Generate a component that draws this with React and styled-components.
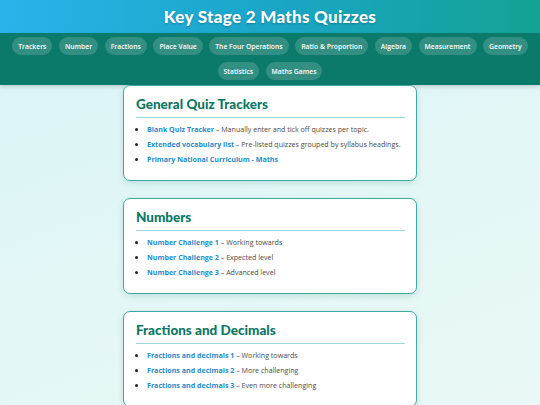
import styled, { createGlobalStyle } from 'styled-components';

const GlobalStyle = createGlobalStyle`
  html, body {
    margin: 0;
    padding: 0;
  }
  body {
    font-family: 'Open Sans', 'Liberation Sans', sans-serif;
    background: linear-gradient(160deg, #d9f4f5 0%, #e4f7f6 60%, #e9f8f5 100%);
    min-height: 405px;
  }
`;

const navItems = [
  'Trackers', 'Number', 'Fractions', 'Place Value', 'The Four Operations',
  'Ratio & Proportion', 'Algebra', 'Measurement', 'Geometry', 'Statistics', 'Maths Games',
];

const sections = [
  {
    title: 'General Quiz Trackers',
    items: [
      { link: 'Blank Quiz Tracker', desc: 'Manually enter and tick off quizzes per topic.' },
      { link: 'Extended vocabulary list', desc: 'Pre-listed quizzes grouped by syllabus headings.' },
      { link: 'Primary National Curriculum - Maths' },
    ],
  },
  {
    title: 'Numbers',
    items: [
      { link: 'Number Challenge 1', desc: 'Working towards' },
      { link: 'Number Challenge 2', desc: 'Expected level' },
      { link: 'Number Challenge 3', desc: 'Advanced level' },
    ],
  },
  {
    title: 'Fractions and Decimals',
    items: [
      { link: 'Fractions and decimals 1', desc: 'Working towards' },
      { link: 'Fractions and decimals 2', desc: 'More challenging' },
      { link: 'Fractions and decimals 3', desc: 'Even more challenging' },
    ],
  },
];

const App = () => {
  return (
    <>
      <GlobalStyle />
      <Header>
        <Title>Key Stage 2 Maths Quizzes</Title>
      </Header>
      <Nav>
        {navItems.map((n) => (
          <Pill key={n}>{n}</Pill>
        ))}
      </Nav>
      <Main>
        {sections.map((s) => (
          <Card key={s.title}>
            <CardTitle>{s.title}</CardTitle>
            <List>
              {s.items.map((it) => (
                <Item key={it.link}>
                  <Link>{it.link}</Link>
                  {it.desc && <Desc> – {it.desc}</Desc>}
                </Item>
              ))}
            </List>
          </Card>
        ))}
      </Main>
    </>
  );
};

const Header = styled.header`
  height: 33px;
  display: flex;
  align-items: center;
  justify-content: center;
  background: linear-gradient(90deg, #29b3ea 0%, #1aa6c6 50%, #14a293 100%);
`;

const Title = styled.h1`
  margin: 0;
  color: #fff;
  font-family: 'Lato', 'Liberation Sans', sans-serif;
  font-weight: 900;
  font-size: 17px;
  letter-spacing: 0.3px;
  text-shadow: 0 1px 2px rgba(0, 0, 0, 0.25);
`;

const Nav = styled.nav`
  background: #0b7a6b;
  display: flex;
  flex-wrap: wrap;
  justify-content: center;
  gap: 7px 6.5px;
  padding: 4px 8px 5px;
  box-shadow: 0 2px 4px rgba(0, 0, 0, 0.15);
`;

const Pill = styled.span`
  display: inline-flex;
  align-items: center;
  height: 18px;
  padding: 0 6px;
  border-radius: 9px;
  background: rgba(255, 255, 255, 0.16);
  color: #fff;
  font-size: 6.8px;
  font-weight: 600;
`;

const Main = styled.main`
  display: flex;
  flex-direction: column;
  align-items: center;
  gap: 17px;
  padding: 0 0 20px;
`;

const Card = styled.section`
  width: 294px;
  box-sizing: border-box;
  background: #fff;
  border: 1px solid #3fa9a1;
  border-radius: 7px;
  padding: 8px 11px 13px 12px;
  box-shadow: 0 2px 6px rgba(20, 120, 110, 0.18);
`;

const CardTitle = styled.h2`
  margin: 0;
  padding-bottom: 3px;
  border-bottom: 1.5px solid #9bd7e2;
  color: #0c7765;
  font-family: 'Lato', 'Liberation Sans', sans-serif;
  font-weight: 900;
  font-size: 13.5px;
  line-height: 20px;
`;

const List = styled.ul`
  margin: 4px 0 0;
  padding: 0 0 0 11px;
`;

const Item = styled.li`
  font-size: 7.1px;
  line-height: 15px;
  color: #222;
  white-space: nowrap;
`;

const Link = styled.a`
  color: #1f8bcc;
  font-weight: 700;
`;

const Desc = styled.span`
  color: #4a4a4a;
`;

export default App;
